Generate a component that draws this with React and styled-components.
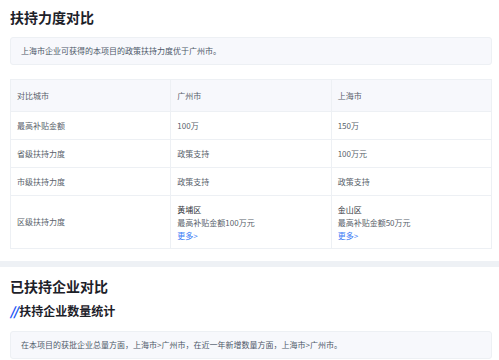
import styled, { createGlobalStyle } from "styled-components";

const GlobalStyle = createGlobalStyle`
  html, body {
    margin: 0;
    padding: 0;
    background: #ffffff;
    font-family: "Noto Sans CJK SC", "Noto Sans", sans-serif;
  }
`;

const colors = {
  title: "#1d2129",
  text: "#4e5969",
  cell: "#595f6b",
  border: "#edf0f4",
  soft: "#f7f8fc",
  band: "#eef1f5",
  blue: "#3b7cf6",
};

const Page = styled.div`
  width: 499px;
  display: flex;
  flex-direction: column;
`;

const Section = styled.section`
  display: flex;
  flex-direction: column;
  padding: ${(p) => p.$pad || "7px 7px 12px 10px"};
`;

const Title = styled.h2`
  margin: 0;
  font-size: 14px;
  line-height: 20px;
  font-weight: 700;
  color: ${colors.title};
`;

const SubTitle = styled.h3`
  margin: 6px 0 0;
  font-size: 12px;
  line-height: 18px;
  font-weight: 700;
  color: ${colors.title};
  display: flex;
  align-items: center;
`;

const Slashes = styled.span`
  color: #2458f5;
  font-style: italic;
  font-weight: 900;
  letter-spacing: -1px;
  margin-right: 2px;
`;

const Note = styled.div`
  margin-top: ${(p) => p.$gap || "10px"};
  padding: 7px 10px;
  background: ${colors.soft};
  border: 1px solid ${colors.border};
  border-radius: 3px;
  font-size: 8px;
  line-height: 12px;
  color: ${colors.text};
`;

const Table = styled.table`
  margin-top: 14px;
  width: 100%;
  border-collapse: collapse;
  table-layout: fixed;
  font-size: 8px;
  line-height: 12px;
  color: ${colors.cell};
`;

const Th = styled.th`
  height: 31px;
  padding: 0 6px;
  text-align: left;
  font-weight: 400;
  background: ${colors.soft};
  border: 1px solid ${colors.border};
`;

const Td = styled.td`
  height: ${(p) => (p.$tall ? "52px" : "27px")};
  padding: 0 6px;
  border: 1px solid ${colors.border};
  vertical-align: middle;
`;

const Line = styled.div`
  line-height: 13px;
`;

const District = styled(Line)`
  color: #30343b;
`;

const More = styled(Line)`
  color: ${colors.blue};
`;

const Band = styled.div`
  height: 6px;
  background: ${colors.band};
`;

const rows = [
  ["最高补贴金额", "100万", "150万"],
  ["省级扶持力度", "政策支持", "100万元"],
  ["市级扶持力度", "政策支持", "政策支持"],
];

const districts = [
  { name: "黄埔区", amount: "最高补贴金额100万元" },
  { name: "金山区", amount: "最高补贴金额50万元" },
];

export default function App() {
  return (
    <Page>
      <GlobalStyle />
      <Section>
        <Title>扶持力度对比</Title>
        <Note>上海市企业可获得的本项目的政策扶持力度优于广州市。</Note>
        <Table>
          <thead>
            <tr>
              <Th>对比城市</Th>
              <Th>广州市</Th>
              <Th>上海市</Th>
            </tr>
          </thead>
          <tbody>
            {rows.map((r) => (
              <tr key={r[0]}>
                {r.map((c, i) => (
                  <Td key={i}>{c}</Td>
                ))}
              </tr>
            ))}
            <tr>
              <Td $tall>区级扶持力度</Td>
              {districts.map((d) => (
                <Td $tall key={d.name}>
                  <District>{d.name}</District>
                  <Line>{d.amount}</Line>
                  <More>更多&gt;</More>
                </Td>
              ))}
            </tr>
          </tbody>
        </Table>
      </Section>
      <Band />
      <Section $pad="9px 7px 10px 10px">
        <Title>已扶持企业对比</Title>
        <SubTitle>
          <Slashes>//</Slashes>扶持企业数量统计
        </SubTitle>
        <Note $gap="11px">在本项目的获批企业总量方面，上海市&gt;广州市，在近一年新增数量方面，上海市&gt;广州市。</Note>
      </Section>
    </Page>
  );
}
